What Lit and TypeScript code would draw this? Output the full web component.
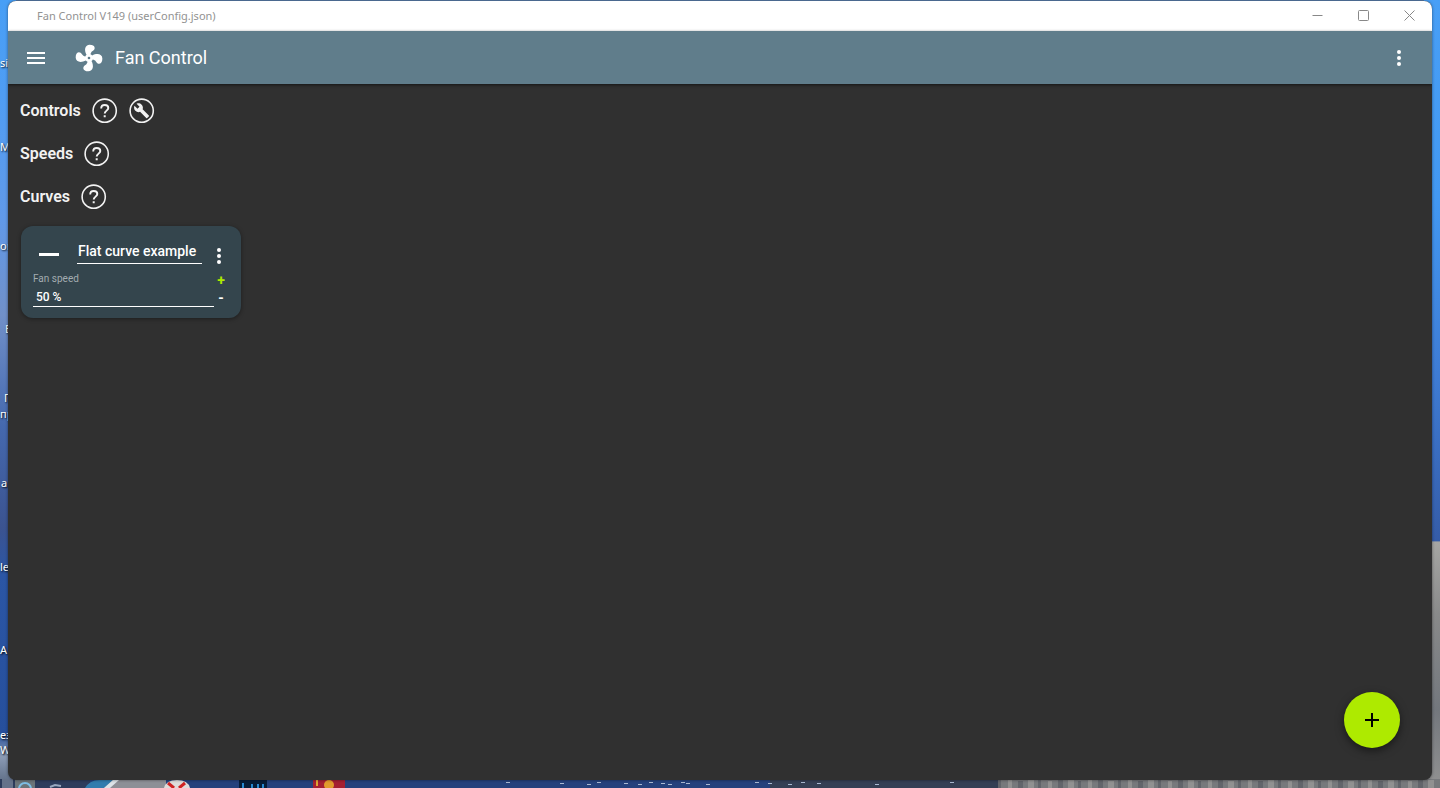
import { LitElement, html, css, svg } from "lit";
import { customElement, state } from "lit/decorators.js";

const FAN =
  "M12,11A1,1 0 0,0 11,12A1,1 0 0,0 12,13A1,1 0 0,0 13,12A1,1 0 0,0 12,11M12.5,2C17,2 17.11,5.57 14.75,6.75C13.76,7.24 13.32,8.29 13.13,9.22C13.61,9.42 14.03,9.73 14.35,10.13C18.05,8.13 22.03,8.92 22.03,12.5C22.03,17 18.46,17.1 17.28,14.73C16.78,13.74 15.72,13.3 14.79,13.11C14.59,13.59 14.28,14 13.88,14.34C15.87,18.03 15.08,22 11.5,22C7,22 6.91,18.42 9.27,17.24C10.25,16.75 10.69,15.71 10.89,14.79C10.4,14.59 9.97,14.27 9.65,13.87C5.96,15.85 2,15.07 2,11.5C2,7 5.56,6.89 6.74,9.26C7.24,10.25 8.29,10.68 9.22,10.87C9.41,10.39 9.73,9.97 10.14,9.65C8.15,5.96 8.94,2 12.5,2Z";
const WRENCH =
  "M22.7 19l-9.1-9.1c.9-2.3.4-5-1.5-6.9-2-2-5-2.4-7.4-1.3L9 6 6 9 1.6 4.7C.4 7.1.9 10.1 2.9 12.1c1.9 1.9 4.6 2.4 6.9 1.5l9.1 9.1c.4.4 1 .4 1.4 0l2.3-2.3c.5-.4.5-1.1.1-1.4z";

const dots = html`<svg width="24" height="24" viewBox="0 0 24 24" aria-hidden="true" fill="currentColor">
  <circle cx="12" cy="6" r="2" /><circle cx="12" cy="12" r="2" /><circle cx="12" cy="18" r="2" />
</svg>`;

const help = html`<svg width="26" height="26" viewBox="0 0 26 26" aria-hidden="true" fill="none" stroke="currentColor">
  <circle cx="12.7" cy="12.7" r="11.6" stroke-width="1.6" />
  <path d="M9.2 10.4C9.2 8 10.7 7 12.7 7S16.3 8.1 16.3 10C16.3 12.5 12.7 12.8 12.7 15.6" stroke-width="1.9" />
  <path d="M12.7 17.2v2" stroke-width="2" />
</svg>`;

const wrench = html`<svg width="26" height="26" viewBox="0 0 26 26" aria-hidden="true">
  <circle cx="12.7" cy="12.7" r="11.6" stroke-width="1.6" fill="none" stroke="currentColor" />
  <path d=${WRENCH} fill="currentColor" transform="translate(4.4 4.6) scale(.68)" />
</svg>`;

/* Desktop shortcuts whose captions peek out beside the window. */
const captions = [
  { text: "sip", left: 0, top: 56 },
  { text: "M", left: 0, top: 140 },
  { text: "or", left: 0, top: 239 },
  { text: "Б", left: 5, top: 322 },
  { text: "П", left: 4, top: 391 },
  { text: "пр", left: 0, top: 407 },
  { text: "a", left: 1, top: 476 },
  { text: "le", left: 0, top: 560 },
  { text: "A", left: 0, top: 643 },
  { text: "ез", left: 0, top: 728 },
  { text: "W", left: 0, top: 743 },
];

@customElement("desktop-backdrop")
class DesktopBackdrop extends LitElement {
  static styles = css`
    :host {
      position: absolute;
      inset: 0;
      overflow: hidden;
      background: #5a7fae;
    }
    .left, .right {
      position: absolute;
      top: 0;
      bottom: 0;
      width: 16px;
    }
    .left {
      left: 0;
      background: linear-gradient(#489ff6, #4f9df3 12%, #6199e8 28%, #7190c8 40%, #4569af 54%, #3b5390 67%, #2b56a5 73%, #264f9c 93%, #8b9bb5 96%, #56657d);
    }
    .right {
      right: 0;
      background: linear-gradient(#489ff6, #4298f2 25%, #3e7bd3 48%, #355ca8 68.6%, #a6a6a3 68.8%, #898a8a 78%, #73777d 90%, #929292);
    }
    .bottom {
      position: absolute;
      left: 0;
      bottom: 0;
      width: 100%;
      height: 9px;
    }
    .caption {
      position: absolute;
      white-space: nowrap;
      font: 11px/14px "Noto Sans", sans-serif;
      color: #fff;
      text-shadow: 1px 1px 2px #000;
    }
  `;

  render() {
    const flakes = [506, 560, 587, 597, 624, 638, 649, 661, 668, 681, 686, 706, 755, 768, 788, 801, 817, 875, 950];
    const rubble = Array.from({ length: 44 }, (_, i) => 998 + i * 10);
    return html`
      <div class="left"></div>
      <div class="right"></div>
      <svg class="bottom" viewBox="0 0 1440 9" preserveAspectRatio="none" aria-hidden="true">
        <rect width="1440" height="9" fill="#24417c" />
        <rect width="90" height="9" fill="#2d3c5c" />
        <rect x="2" width="11" height="9" fill="#65728a" />
        <rect x="15" width="20" height="9" fill="#6b7479" />
        <circle cx="25" cy="10" r="6" fill="none" stroke="#7ebde4" stroke-width="2" />
        <path d="M50 8l5-2 6 1" stroke="#9aa9c0" stroke-width="2" fill="none" />
        <rect x="104" width="62" height="9" fill="#8d8f96" />
        <path d="M85 9Q90 1 99 1H113L104 9Z" fill="#327cae" />
        <path d="M104 9L113 1H119L110 9Z" fill="#dce3e8" />
        <path d="M164 9Q166 1 177 1T190 9Z" fill="#dedcda" />
        <path d="M168 4l6 5M185 4l-6 5" stroke="#cf2222" stroke-width="3" />
        <rect x="239" y="1" width="28" height="8" fill="#061d38" />
        <path d="M243 4v5M252 5v4M258 5v4M263 5v4" stroke="#2789d1" stroke-width="2" />
        <rect x="313" y="1" width="32" height="8" fill="#a42031" />
        <circle cx="329" cy="6" r="5" fill="#e19b2c" />
        <rect x="316" y="1" width="2" height="6" fill="#dda634" />
        <rect x="770" width="230" height="9" fill="#343f54" />
        ${flakes.map((x, i) => svg`<rect x=${x} y=${3 + (i % 3)} width="4" height="1" fill="#a9b9d2" />`)}
        <rect x="998" width="442" height="9" fill="#77797c" />
        ${rubble.map((x, i) => svg`<rect x=${x} y=${i % 3} width=${3 + (i % 4)} height="9" fill=${i % 2 ? "#919191" : "#62656b"} />`)}
      </svg>
      ${captions.map((c) => html`<span class="caption" style="left:${c.left}px;top:${c.top}px">${c.text}</span>`)}
    `;
  }
}

@customElement("curve-card")
class CurveCard extends LitElement {
  @state() speed = 50;

  static styles = css`
    :host {
      display: block;
      box-sizing: border-box;
      width: 220px;
      padding: 12px 5px 11px 12px;
      border-radius: 12px;
      background: #34454d;
      color: #fff;
      box-shadow: 0 1px 4px rgba(0, 0, 0, 0.4);
    }
    .top {
      display: grid;
      grid-template-columns: 32px 1fr 34px;
      align-items: end;
    }
    .flat { display: block; }
    input {
      box-sizing: border-box;
      width: 100%;
      min-width: 0;
      border: 0;
      border-bottom: 1px solid #fff;
      border-radius: 0;
      outline: 0;
      background: none;
      color: inherit;
      font-family: Roboto, sans-serif;
      font-weight: 500;
    }
    .name {
      height: 26px;
      padding: 0 0 0 1px;
      font-size: 14px;
    }
    .namebox { padding-left: 12px; }
    button {
      display: grid;
      place-items: center;
      border: 0;
      padding: 0;
      background: none;
      color: inherit;
      font: 700 14px/16px Roboto, sans-serif;
    }
    .more { height: 20px; }
    .bottom {
      display: grid;
      grid-template-columns: 1fr 14px 8px;
      margin-top: 7px;
    }
    label {
      display: block;
      font: 10px/16px Roboto, sans-serif;
      color: #a3acb0;
    }
    .value {
      display: block;
      height: 20px;
      padding: 0 0 0 3px;
      font-size: 12px;
    }
    .steps { display: grid; grid-template-rows: 18px 18px; }
    .up { color: #aeea00; }
  `;

  render() {
    return html`
      <div class="top">
        <svg class="flat" width="32" height="16" viewBox="0 0 32 16" aria-hidden="true">
          <rect x="6" y="5" width="20" height="3" fill="#fff" />
        </svg>
        <div class="namebox"><input class="name" aria-label="Curve name" value="Flat curve example" /></div>
        <button class="more" aria-label="Curve menu">${dots}</button>
      </div>
      <div class="bottom">
        <div>
          <label for="speed">Fan speed</label>
          <input id="speed" class="value" .value=${`${this.speed} %`} />
        </div>
        <div class="steps">
          <button class="up" aria-label="Increase" @click=${() => (this.speed = Math.min(100, this.speed + 1))}>+</button>
          <button aria-label="Decrease" @click=${() => (this.speed = Math.max(0, this.speed - 1))}>-</button>
        </div>
      </div>
    `;
  }
}

@customElement("app-root")
class AppRoot extends LitElement {
  static styles = css`
    :host {
      display: grid;
      position: relative;
      box-sizing: border-box;
      height: 100vh;
      padding: 1px 8px 8px;
      font-family: Roboto, sans-serif;
    }
    .window {
      position: relative;
      display: flex;
      flex-direction: column;
      min-height: 0;
      overflow: hidden;
      border-radius: 8px;
      background: #303030;
      color: #f2f2f2;
      box-shadow: 0 0 3px rgba(0, 0, 0, 0.5);
    }
    .titlebar {
      display: flex;
      align-items: center;
      height: 30px;
      flex: none;
      padding-left: 29px;
      background: #fff;
      color: #929292;
      font: 11px/16px "Noto Sans", sans-serif;
    }
    .title { flex: 1; }
    button {
      display: grid;
      place-items: center;
      padding: 0;
      border: 0;
      background: none;
      color: inherit;
    }
    .caption { width: 46px; height: 28px; align-self: start; }
    .appbar {
      display: flex;
      align-items: center;
      flex: none;
      height: 53px;
      padding: 0 21px 0 16px;
      background: #607d8b;
      color: #fff;
      box-shadow: 0 1px 3px rgba(0, 0, 0, 0.6);
      z-index: 1;
    }
    .logo { margin: 0 10px 0 25px; }
    h1 {
      flex: 1;
      margin: 0;
      font-size: 18px;
      font-weight: 400;
      line-height: 24px;
    }
    main { padding: 5px 12px; }
    .section {
      display: flex;
      align-items: center;
      gap: 11px;
      height: 43px;
    }
    h2 {
      margin: 0;
      font-size: 16px;
      font-weight: 600;
      line-height: 20px;
    }
    .cards { display: flex; padding: 8px 1px; }
    .add {
      position: absolute;
      right: 32px;
      bottom: 32px;
      width: 56px;
      height: 56px;
      border-radius: 50%;
      background: #aeea00;
      color: #000;
      box-shadow: 0 3px 8px rgba(0, 0, 0, 0.5);
    }
  `;

  render() {
    return html`
      <desktop-backdrop></desktop-backdrop>
      <div class="window">
        <div class="titlebar">
          <span class="title">Fan Control V149 (userConfig.json)</span>
          <button class="caption" aria-label="Minimize">
            <svg width="11" height="11" viewBox="0 0 11 11"><path d="M.5 5.5h10" stroke="#888" /></svg>
          </button>
          <button class="caption" aria-label="Maximize">
            <svg width="11" height="11" viewBox="0 0 11 11"><rect x=".5" y=".5" width="10" height="10" rx="1" fill="none" stroke="#888" /></svg>
          </button>
          <button class="caption" aria-label="Close">
            <svg width="11" height="11" viewBox="0 0 11 11"><path d="M.5 .5l10 10M10.5 .5l-10 10" stroke="#888" /></svg>
          </button>
        </div>
        <header class="appbar">
          <button aria-label="Open menu">
            <svg width="24" height="24" viewBox="0 0 24 24"><path d="M3 6h18v2H3zM3 11h18v2H3zM3 16h18v2H3z" fill="currentColor" /></svg>
          </button>
          <svg class="logo" width="32" height="32" viewBox="0 0 24 24" aria-hidden="true"><path d=${FAN} fill="currentColor" /></svg>
          <h1>Fan Control</h1>
          <button aria-label="More options">${dots}</button>
        </header>
        <main>
          <section class="section">
            <h2>Controls</h2>
            <button aria-label="Help on controls">${help}</button>
            <button aria-label="Configure controls">${wrench}</button>
          </section>
          <section class="section">
            <h2>Speeds</h2>
            <button aria-label="Help on speeds">${help}</button>
          </section>
          <section class="section">
            <h2>Curves</h2>
            <button aria-label="Help on curves">${help}</button>
          </section>
          <div class="cards"><curve-card></curve-card></div>
        </main>
        <button class="add" aria-label="Add">
          <svg width="24" height="24" viewBox="0 0 24 24"><path d="M5 12h14M12 5v14" stroke="currentColor" stroke-width="2" /></svg>
        </button>
      </div>
    `;
  }
}
